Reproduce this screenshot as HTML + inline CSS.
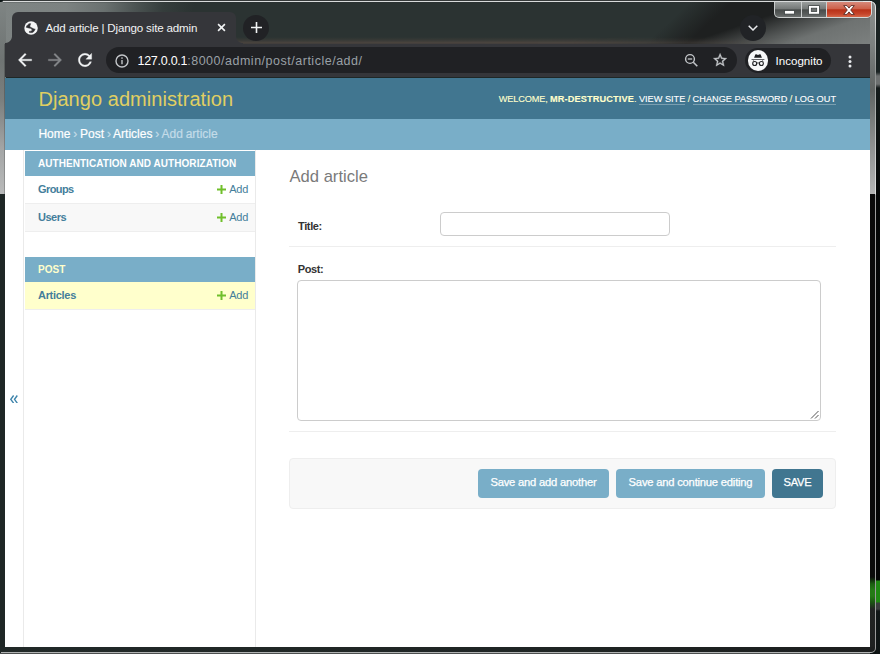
<!DOCTYPE html>
<html>
<head>
<meta charset="utf-8">
<title>Add article | Django site admin</title>
<style>
html,body{margin:0;padding:0;}
body{width:880px;height:654px;overflow:hidden;background:#070a0a;font-family:"Liberation Sans",sans-serif;position:relative;}
.abs{position:absolute;}
.t{position:absolute;white-space:nowrap;line-height:1;}
/* ---------- window frame ---------- */
#frame{left:0;top:0;width:876px;height:654px;background:#1f2726;}
#frameR{left:870px;top:194px;width:5px;height:458px;background:linear-gradient(to bottom,#0a0a0a 0,#0a0a0a 383px,#1b5f10 390px,#247a15 396px,#247a15 402px,#1b5712 408px,#222423 415px,#1e2020 458px);}
#frameRline{left:875px;top:8px;width:1px;height:638px;background:linear-gradient(to bottom,#e4e6e6 0,#b4b7b6 30px,#8e9190 66px,#c9caca 146px,#dedfdf 186px,#9c9c9c 187px,#999 100%);}
#cornerTR{left:862px;top:1px;width:13px;height:8px;border-top:1px solid #d9dbdb;border-right:1px solid #e4e6e6;border-radius:0 6px 0 0;}
#cornerTRout{left:870px;top:0;width:10px;height:8px;background:radial-gradient(circle at 0 100%,rgba(20,32,31,0) 6.300px,#14201f 7px);}
#cornerBR{left:866px;top:643px;width:9px;height:9px;border-bottom:1px solid #b0b2b2;border-right:1px solid #999;border-radius:0 0 5px 0;}
#cornerBRout{left:870px;top:647px;width:6px;height:7px;background:radial-gradient(circle at 0 0,rgba(10,16,16,0) 5.600px,#0a1010 6.300px);}
#outR{left:876px;top:0;width:4px;height:654px;background:linear-gradient(to bottom,#1a2222 0,#1a2222 72px,#6d7070 76px,#6d7070 84px,#151b1b 88px,#050707 196px,#030404 580px,#1f8a12 581px,#1f8a12 602px,#3a3d3d 603px,#3a3d3d 609px,#111717 611px,#0e1414 654px);}
#frameB{left:0;top:647px;width:876px;height:5px;background:linear-gradient(to right,#212928 0,#1f2524 500px,#1c1e1e 876px);}
#frameBline{left:1px;top:652px;width:866px;height:1px;background:#b0b2b2;}
#frameBline2{left:0;top:653px;width:870px;height:1px;background:#4c4f4f;}
#frameLshade{left:4px;top:44px;width:1px;height:150px;background:rgba(0,0,0,.2);}
#frameTopL{left:0;top:0;width:6px;height:194px;background:linear-gradient(to bottom,#7f8584 0,#6f7473 60px,#7b7f7e 100px,#a4a6a6 150px,#b9baba 194px);}
#frameTopR{left:870px;top:0;width:5px;height:194px;background:linear-gradient(to bottom,#8a8e8d 0,#7d8180 45px,#5f6362 90px,#8a8c8c 140px,#b4b5b5 194px);}
#titlebar{left:0;top:0;width:876px;height:44px;
 background:
 linear-gradient(161deg,rgba(112,116,115,0) 81%,rgba(112,116,115,.55) 86.500%,#6e7271 91%,#7d8180 100%),
 linear-gradient(137deg,rgba(30,32,32,0) 75%,#1e2020 79.500%),
 linear-gradient(100deg,#7f8584 0,#7c8281 66px,#6a7170 104px,#4b5352 135px,#353d3c 162px,#2b3332 192px,#2b3332 100%);}
#titleglow{left:236px;top:36.500px;width:560px;height:7.500px;background:linear-gradient(to bottom,rgba(82,72,65,0) 0,rgba(82,72,65,.35) 45%,rgba(82,72,65,.85) 82%,rgba(70,64,62,.8) 100%);-webkit-mask-image:linear-gradient(to right,rgba(0,0,0,.9) 0,#000 60%,transparent 100%);mask-image:linear-gradient(to right,rgba(0,0,0,.9) 0,#000 60%,transparent 100%);}
#topline{left:3px;top:1px;width:860px;z-index:3;height:1px;background:#d9dbdb;}
#topdark{left:0;top:0;width:872px;height:1px;background:#363a3a;}
#topcorner{left:0;top:0;width:3px;height:2px;background:#0c1414;border-radius:0 0 3px 0;}
#topshade{left:3px;top:2px;width:866px;height:1px;background:rgba(40,46,46,.22);}
/* ---------- chrome ---------- */
#tab{left:12px;top:12px;width:224px;height:32px;background:#35363a;border-radius:6px 6px 0 0;}
#toolbar{left:5px;top:43.700px;width:865px;height:33.800px;background:#35363a;}
#hdrtop{left:5px;top:77.500px;width:865px;height:.6px;background:#417690;}
#omni{left:106px;top:47.200px;width:631px;height:25.600px;border-radius:13px;background:#202124;}
#pill{left:745px;top:48px;width:86px;height:25px;border-radius:13px;background:#202124;}
/* ---------- page ---------- */
#page{left:5px;top:78px;width:865px;height:569px;background:#fff;overflow:hidden;}
#header{left:0;top:0;width:865px;height:41px;background:#417690;}
#crumbs{left:0;top:41px;width:865px;height:31px;background:#79aec8;}

#header .brand{left:33.4px;top:10.6px;font-size:20px;color:#e0cf62;letter-spacing:.06px;}
#usertools{right:34px;top:17.300px;font-size:9.2px;color:#ffc;letter-spacing:-.14px;-webkit-text-stroke:.12px currentColor;}
#usertools b{font-weight:700;letter-spacing:.13px;}
#usertools a{letter-spacing:0;color:#fff;border-bottom:1px solid rgba(255,255,255,.3);}
#crumbs .t{left:33.4px;top:9.100px;font-size:12px;color:#fff;letter-spacing:0;word-spacing:-.5px;-webkit-text-stroke:.2px #fff;}
#crumbs .t i{font-style:normal;color:#c4dce8;-webkit-text-stroke:.2px #c4dce8;}
/* sidebar */
#toggle{left:0;top:72px;width:18px;height:497px;background:#fff;border-right:1px solid #eaeaea;}
#toggle .t{left:4px;top:240px;font-size:15px;color:#447e9b;}
#sidebar{left:19px;top:72px;width:231px;height:497px;background:#fff;border-right:1px solid #eaeaea;}
.cap{left:1px;width:230px;height:25px;background:#79aec8;}
.cap .t{left:13px;top:8px;font-size:10px;font-weight:700;color:#fff;letter-spacing:.05px;}
.row{left:1px;width:230px;height:27px;border-bottom:1px solid #eee;background:#fff;}
.row.alt{background:#f8f8f8;}
.row.cur{background:#ffc;}
.row .n{left:13px;top:8px;font-size:11px;font-weight:700;color:#447e9b;letter-spacing:-.5px;}
.row .a{right:7px;top:8px;font-size:11px;color:#447e9b;letter-spacing:-.3px;}
.row svg{position:absolute;left:192px;top:8.600px;}
/* main */
#h1{left:284.5px;top:91px;font-size:16.6px;color:#7a7a7a;}
.lbl{font-size:11px;font-weight:700;color:#333;letter-spacing:-.37px;}
.hr{left:284px;width:547px;height:1px;background:#eee;}
#inp{left:435px;top:134px;width:228px;height:22px;border:1px solid #ccc;border-radius:4px;background:#fff;}
#ta{left:292px;top:202px;width:522px;height:139px;border:1px solid #ccc;border-radius:4px;background:#fff;}
#submit{left:284px;top:380px;width:545px;height:49px;border:1px solid #eee;border-radius:4px;background:#f8f8f8;}
.btn{top:391px;height:29px;border-radius:4px;background:#79aec8;color:#fff;font-size:11.200px;letter-spacing:-.2px;-webkit-text-stroke:.25px #fff;text-align:center;line-height:26.400px;white-space:nowrap;}
.btn.def{background:#417690;}

/* chrome details */
#tabcurveL{left:5px;top:36px;width:7px;height:8px;background:radial-gradient(circle at 0 0,rgba(53,54,58,0) 6.5px,#35363a 7.5px);}
#tabcurveR{left:236px;top:36px;width:7px;height:8px;background:radial-gradient(circle at 100% 0,rgba(53,54,58,0) 6.5px,#35363a 7.5px);}
#tabtitle{left:45.5px;top:21.6px;font-size:11.6px;color:#f1f3f4;letter-spacing:-.17px;}
#newtab{left:243px;top:14.500px;width:26px;height:26px;border-radius:50%;background:#212225;}
#tabsearch{left:740px;top:14.5px;width:26px;height:26px;border-radius:50%;background:#212326;}
#url{left:137.5px;top:54.500px;font-size:12.5px;color:#fff;letter-spacing:-.27px;}
#url span{color:#9aa0a6;letter-spacing:.51px;}
#incog{left:775.5px;top:54.5px;font-size:11.6px;color:#fff;}
#avatar{left:747.500px;top:50px;width:20.600px;height:20.600px;border-radius:50%;background:#f7f8f9;}
/* window controls */
#wc{left:774px;top:1px;width:98px;height:17.300px;border-radius:0 0 5px 5px;background:rgba(232,235,235,.85);box-shadow:0 0 1px rgba(0,0,0,.5);}
#wc div{position:absolute;top:1px;height:15.300px;}
#wmin{left:1px;width:26px;border-radius:0 0 0 4px;background:linear-gradient(to bottom,#9a9e9d 0,#747877 46%,#484c4b 52%,#5c605f 85%,#6e7271 100%);}
#wmax{left:28px;width:24px;background:linear-gradient(to bottom,#9a9e9d 0,#747877 46%,#484c4b 52%,#5c605f 85%,#6e7271 100%);}
#wclose{left:53px;width:44px;border-radius:0 0 4px 0;background:linear-gradient(to bottom,#d6897a 0,#cd614a 45%,#b93118 52%,#c6452a 80%,#d4684a 100%);}
</style>
</head>
<body>
<div id="frame" class="abs"></div>
<div id="outR" class="abs"></div>
<div id="frameR" class="abs"></div>
<div id="frameB" class="abs"></div>
<div id="frameBline" class="abs"></div>
<div id="frameBline2" class="abs"></div>
<div id="titlebar" class="abs"></div>
<div id="titleglow" class="abs"></div>
<div id="frameTopL" class="abs"></div>
<div id="frameLshade" class="abs"></div>
<div id="frameTopR" class="abs"></div>
<div id="topdark" class="abs"></div>
<div id="topshade" class="abs"></div>
<div id="topcorner" class="abs" style="z-index:4"></div>
<div id="topline" class="abs"></div>
<div id="frameRline" class="abs"></div>
<div id="cornerTRout" class="abs"></div>
<div id="cornerTR" class="abs"></div>
<div id="cornerBRout" class="abs"></div>
<div id="cornerBR" class="abs"></div>

<div id="tab" class="abs"></div>
<div id="toolbar" class="abs"></div>
<div id="hdrtop" class="abs"></div>
<div id="omni" class="abs"></div>
<div id="pill" class="abs"></div>


<div id="tabcurveL" class="abs"></div>
<div id="tabcurveR" class="abs"></div>
<svg class="abs" style="left:23.950px;top:20.550px" width="14.100" height="14.100" viewBox="0 0 14.100 14.100"><circle cx="7.050" cy="7.050" r="6.750" fill="#f4f5f6"/><path fill="#2e2f33" stroke="#2e2f33" stroke-width=".650" stroke-linejoin="round" d="M2.300 6.300C2.500 5.200 3.100 4.100 4.900 2.900C5.500 2.700 6.200 2.700 6.700 2.750C6.300 3.300 6 4.200 5.800 5.050C5.900 5.600 6.100 6 6.400 6.300L9.500 7.800L10.400 8.300L11 7.800C11 8.600 10.800 9.200 10.400 9.600C10 10.400 9.500 10.900 8.900 11.200C8.200 11.500 7.400 11.650 6.700 11.600C6.100 11.550 5.600 11.400 5.200 11.200L5.500 10.400C6 10.400 6.600 10.350 7 10.200C7.600 10 8 9.700 8.300 9.300C8.200 8.800 8 8.400 7.650 8.100C7.300 7.700 6.900 7.400 6.400 7.200L4.600 6.900Z"/></svg>
<div id="tabtitle" class="t">Add article | Django site admin</div>
<svg class="abs" style="left:216.500px;top:23.350px" width="9" height="9" viewBox="0 0 9 9"><path d="M1.100 1.100l6.800 6.800M7.900 1.100l-6.800 6.800" stroke="#f1f3f4" stroke-width="1.600" fill="none"/></svg>
<div id="newtab" class="abs"><svg style="position:absolute;left:7.5px;top:7.5px" width="11" height="11" viewBox="0 0 11 11"><path d="M5.5 0v11M0 5.500h11" stroke="#f1f3f4" stroke-width="1.6" fill="none"/></svg></div>
<div id="tabsearch" class="abs"><svg style="position:absolute;left:8px;top:10px" width="10" height="6" viewBox="0 0 10 6"><path d="M.7.800l4.300 4.200l4.300-4.200" stroke="#e8eaed" stroke-width="1.5" fill="none"/></svg></div>

<!-- nav icons -->
<svg class="abs" style="left:15.2px;top:49.900px" width="20" height="20" viewBox="0 0 24 24"><path fill="#f1f3f4" stroke="#f1f3f4" stroke-width=".350" d="M20 11H7.830l5.590-5.590L12 4l-8 8 8 8 1.410-1.410L7.830 13H20v-2z"/></svg>
<svg class="abs" style="left:45px;top:49.900px" width="20" height="20" viewBox="0 0 24 24"><path fill="#85878a" stroke="#85878a" stroke-width=".350" d="M12 4l-1.410 1.410L16.170 11H4v2h12.170l-5.580 5.590L12 20l8-8z"/></svg>
<svg class="abs" style="left:74.9px;top:49.900px" width="20" height="20" viewBox="0 0 24 24"><path fill="#f1f3f4" stroke="#f1f3f4" stroke-width=".350" d="M17.650 6.350C16.200 4.900 14.210 4 12 4c-4.420 0-7.990 3.580-7.990 8s3.570 8 7.990 8c3.730 0 6.840-2.550 7.730-6h-2.080c-.82 2.330-3.040 4-5.650 4-3.310 0-6-2.690-6-6s2.690-6 6-6c1.660 0 3.140.69 4.220 1.780L13 11h7V4l-2.350 2.350z"/></svg>

<!-- omnibox icons -->
<svg class="abs" style="left:114.200px;top:52.500px" width="16" height="16" viewBox="0 0 16 16"><circle cx="8" cy="8" r="6" fill="none" stroke="#c3c6c9" stroke-width="1.400"/><path d="M8 7v4.200" stroke="#c3c6c9" stroke-width="1.400"/><circle cx="8" cy="5" r=".85" fill="#c3c6c9"/></svg>
<div id="url" class="t">127.0.0.1<span>:8000/admin/post/article/add/</span></div>
<svg class="abs" style="left:682.500px;top:52.250px" width="17" height="17" viewBox="0 0 17 17"><circle cx="7" cy="7" r="4.400" fill="none" stroke="#c3c6c9" stroke-width="1.400"/><path d="M4.800 7h4.400" stroke="#c3c6c9" stroke-width="1.300"/><path d="M10.300 10.300l4 4" stroke="#c3c6c9" stroke-width="1.600"/></svg>
<svg class="abs" style="left:711.900px;top:52px" width="16.200" height="16.200" viewBox="0 0 24 24"><path fill="#c3c6c9" stroke="#c3c6c9" stroke-width=".5" d="M22 9.240l-7.190-.62L12 2 9.190 8.630 2 9.240l5.460 4.730L5.820 21 12 17.270 18.180 21l-1.630-7.030L22 9.240zM12 15.400l-3.760 2.270 1-4.280-3.320-2.880 4.380-.38L12 6.100l1.710 4.040 4.380.38-3.320 2.880 1 4.280L12 15.400z"/></svg>
<div id="avatar" class="abs"><svg style="position:absolute;left:0;top:0" width="20.600" height="20.600" viewBox="0 0 20.600 20.600"><path fill="#1f2023" d="M6.100 7.700L7.300 4.600Q7.600 4.050 8.300 4.250L10 4.900L11.700 4.250Q12.400 4.050 12.700 4.600L13.900 7.700Z"/><rect x="3.500" y="9.050" width="12.900" height=".850" fill="#4a4c50"/><path d="M5.700 10.100L5.100 11.900M14.400 10.100L15 11.900" stroke="#55575b" stroke-width=".7"/><circle cx="6.700" cy="13.500" r="2" fill="none" stroke="#232427" stroke-width="1.150"/><circle cx="13.400" cy="13.500" r="2" fill="none" stroke="#232427" stroke-width="1.150"/><path d="M8.600 13.200Q10.050 12.500 11.500 13.200" stroke="#232427" stroke-width=".8" fill="none"/></svg></div>
<div id="incog" class="t">Incognito</div>
<svg class="abs" style="left:847.500px;top:54.500px" width="4" height="13" viewBox="0 0 4 13"><circle cx="2" cy="2" r="1.500" fill="#e8eaed"/><circle cx="2" cy="6.500" r="1.500" fill="#e8eaed"/><circle cx="2" cy="11" r="1.500" fill="#e8eaed"/></svg>

<!-- window controls -->
<div id="wc" class="abs">
  <div id="wmin"><svg style="position:absolute;left:8.500px;top:7.500px" width="11" height="5" viewBox="0 0 11 5"><rect x=".5" y=".5" width="10" height="3.600" fill="#fff" stroke="#3b4040" stroke-width=".8"/></svg></div>
  <div id="wmax"><svg style="position:absolute;left:6px;top:2.500px" width="12" height="10" viewBox="0 0 12 10"><rect x=".6" y=".6" width="10.800" height="8.600" fill="#fff" stroke="#3b4040" stroke-width=".8"/><rect x="3.300" y="3.200" width="5.400" height="3.200" fill="#6d7170" stroke="#3b4040" stroke-width=".8"/></svg></div>
  <div id="wclose"><svg style="position:absolute;left:15.800px;top:2.700px" width="12" height="10" viewBox="0 0 12 10"><path d="M.700.600h3.300L6 3.100 8 .600h3.300L7.700 5l3.600 4.400H8L6 6.900 4 9.400H.700L4.300 5z" fill="#fff" stroke="#5a2a22" stroke-width=".9"/></svg></div>
</div>

<div id="page" class="abs">

  <div id="header" class="abs">
    <div class="t brand">Django administration</div>
    <div id="usertools" class="t">WELCOME, <b>MR-DESTRUCTIVE</b>. <a>VIEW SITE</a> / <a>CHANGE PASSWORD</a> / <a>LOG OUT</a></div>
  </div>
  <div id="crumbs" class="abs"><div class="t">Home <i>›</i> Post <i>›</i> Articles <i>› Add article</i></div></div>

  <div id="toggle" class="abs"><svg style="position:absolute;left:5px;top:244.500px" width="8" height="8.600" viewBox="0 0 8 8.600"><path d="M3.600.500L.800 4.300l2.800 3.800M7.300.500L4.500 4.300l2.800 3.800" stroke="#3d84ab" stroke-width="1.400" fill="none"/></svg></div>
  <div id="sidebar" class="abs">
    <div class="cap abs" style="top:1px"><div class="t">AUTHENTICATION AND AUTHORIZATION</div></div>
    <div class="row abs" style="top:26px"><div class="t n" style="letter-spacing:-.6px">Groups</div><svg width="9" height="9" viewBox="0 0 9 9"><path d="M3.500 0h2v3.500H9v2H5.500V9h-2V5.500H0v-2h3.500z" fill="#70bf2b"/></svg><div class="t a">Add</div></div>
    <div class="row alt abs" style="top:54px"><div class="t n">Users</div><svg width="9" height="9" viewBox="0 0 9 9"><path d="M3.500 0h2v3.500H9v2H5.500V9h-2V5.500H0v-2h3.500z" fill="#70bf2b"/></svg><div class="t a">Add</div></div>
    <div class="cap abs" style="top:107px"><div class="t" style="color:#ffc">POST</div></div>
    <div class="row cur abs" style="top:132px"><div class="t n" style="letter-spacing:-.3px">Articles</div><svg width="9" height="9" viewBox="0 0 9 9"><path d="M3.500 0h2v3.500H9v2H5.500V9h-2V5.500H0v-2h3.500z" fill="#70bf2b"/></svg><div class="t a">Add</div></div>
  </div>

  <div id="h1" class="t">Add article</div>
  <div class="t lbl" style="left:293px;top:143px">Title:</div>
  <div id="inp" class="abs"></div>
  <div class="hr abs" style="top:168px"></div>
  <div class="t lbl" style="left:292.700px;top:185.500px">Post:</div>
  <div id="ta" class="abs"><svg style="position:absolute;right:1px;bottom:1px" width="9" height="9" viewBox="0 0 9 9"><path d="M8.500 1L1 8.500M8.500 5L5 8.500" stroke="#555" stroke-width="1" fill="none"/></svg></div>
  <div class="hr abs" style="top:353px"></div>
  <div id="submit" class="abs"></div>
  <div class="btn abs" style="left:473px;width:131px">Save and add another</div>
  <div class="btn abs" style="left:611px;width:149px">Save and continue editing</div>
  <div class="btn def abs" style="left:767px;width:51px">SAVE</div>
</div>
</body>
</html>
